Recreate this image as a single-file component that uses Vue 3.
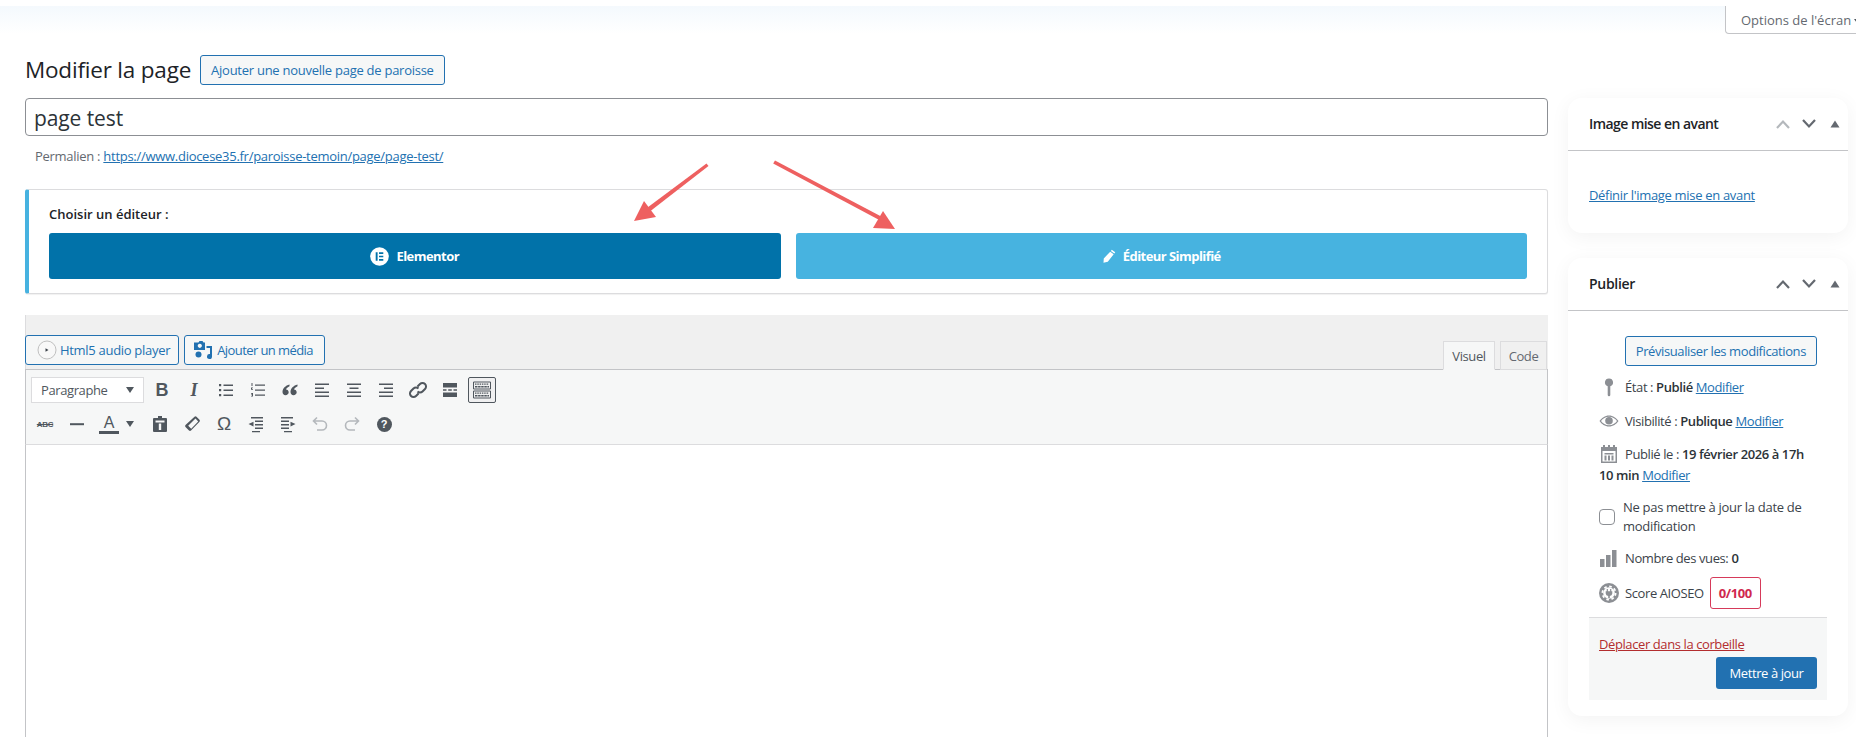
<script setup>
const row1 = [
  { k: 'b', t: 'B', c: 'g-bold' },
  { k: 'i', t: 'I', c: 'g-ital' },
  { k: 'ul', f: 'M3 4h2.200v2.200H3zM7.500 4.500H17V6H7.500zM3 9h2.200v2.200H3zM7.500 9.500H17V11H7.500zM3 14h2.200v2.200H3zM7.500 14.500H17V16H7.500z' },
  { k: 'ol', f: 'M3.500 3h1v3h-1zM3 7.500h2v.8H4v.7h1v.7H3zM3 13h2v3.500H3v-.7h1v-.7H3v-.7h1v-.7H3zM7 4.500h10V5.700H7zM7 9.500h10v1.200H7zM7 14.500h10v1.200H7z' },
  { k: 'q', f: 'M9.500 4.500C5.500 5.500 2.500 8.500 2.500 12c0 2 1.300 3.200 3 3.200S8.700 14 8.700 12.300 7.500 9.500 6 9.500c.4-1.300 1.800-2.600 3.500-3.300zM17.500 4.500c-4 1-7 4-7 7.500 0 2 1.300 3.200 3 3.200s3.200-1.200 3.200-2.900-1.200-2.800-2.700-2.800c.4-1.300 1.800-2.600 3.500-3.300z' },
  { k: 'al', f: 'M3 3.500h14V5H3zM3 7.500h9V9H3zM3 11.500h14V13H3zM3 15.500h14V17H3z' },
  { k: 'ac', f: 'M3 3.500h14V5H3zM5.500 7.500h9V9h-9zM3 11.500h14V13H3zM3 15.500h14V17H3z' },
  { k: 'ar', f: 'M3 3.500h14V5H3zM8 7.500h9V9H8zM3 11.500h14V13H3zM3 15.500h14V17H3z' },
  { k: 'ln', s: 'M9.500 6.500L12 4a3.500 3.500 0 0 1 5 5l-2.500 2.500a3.500 3.500 0 0 1-5 0M10.500 13.500L8 16a3.500 3.500 0 0 1-5-5l2.500-2.500a3.500 3.500 0 0 1 5 0', w: 2 },
  { k: 'mo', f: 'M3 3h14v4.500H3zM3 12.500h14V17H3zM3 9.300h3.500v1.400H3zM8.200 9.300h3.600v1.400H8.200zM13.500 9.300H17v1.400h-3.500z' },
]
const row2 = [
  { k: 'ab', t: 'ABC', c: 'g-abc' },
  { k: 'hr', f: 'M3 9.200h14v2H3z' },
]
const row2b = [
  { k: 'pa', f: 'M8 2h4v2h4a1 1 0 0 1 1 1v12a1 1 0 0 1-1 1H4a1 1 0 0 1-1-1V5a1 1 0 0 1 1-1h4zM5.500 6.500v2h9v-2zM8.800 9.500V16h2.400V9.500z' },
  { k: 'er', f: 'M12.500 2.800a1.500 1.500 0 0 1 2 0l3 3a1.500 1.500 0 0 1 0 2L9 16.500a1.500 1.500 0 0 1-2 0l-3.500-3.500a1.500 1.500 0 0 1 0-2zM13.500 4.500L6.200 11.800l3 3 7-7.300z' },
  { k: 'om', t: 'Ω', c: 'g-om' },
  { k: 'ou', f: 'M5 3h12v1.500H5zM9 6.500h8V8H9zM9 10h8v1.500H9zM9 13.500h8V15H9zM6 17h8v1.300H6zM7.500 7.800v4.700L2.500 10z' },
  { k: 'in', f: 'M3 3h12v1.500H3zM3 6.500h8V8H3zM3 10h8v1.500H3zM3 13.500h8V15H3zM6 17h8v1.300H6zM12.500 7.800v4.700l5-2.500z' },
]
</script>

<template>
  <div class="page">
    <div class="topbar">
      <button class="screen-opts">Options de l'écran<span class="caret small"></span></button>
    </div>

    <div class="wrap">
      <div class="heading">
        <h1>Modifier la page</h1>
        <a class="btn add">Ajouter une nouvelle page de paroisse</a>
      </div>

      <div class="columns">
        <main class="main">
          <div class="title-input">page test</div>
          <div class="permalink">Permalien : <a class="link">https://www.diocese35.fr/paroisse-temoin/page/page-test/</a></div>

          <section class="notice">
            <div class="notice-label">Choisir un éditeur :</div>
            <div class="choices">
              <a class="choice elementor">
                <svg width="19" height="19" viewBox="0 0 20 20"><circle cx="10" cy="10" r="9.800" fill="#fff"/><path fill="#0172a9" d="M6 5.500h2v9H6zM9.500 5.500H14v1.800H9.500zM9.500 9.100H14v1.800H9.500zM9.500 12.700H14v1.800H9.500z"/></svg>
                Elementor
              </a>
              <a class="choice simple">
                <svg width="14" height="14" viewBox="0 0 15 15"><path fill="#fff" d="M10.500.8l3.700 2.700-1 1.400-3.700-2.700zM8.800 2.900l3.700 2.700-6.300 8-4.600 1.200.3-4.700z"/></svg>
                Éditeur Simplifié
              </a>
            </div>
          </section>

          <section class="editor">
            <div class="editor-top">
              <div class="media-btns">
                <a class="btn media audio">
                  <svg width="20" height="20" viewBox="0 0 20 20"><circle cx="10" cy="10" r="9" fill="#f8f8f8" stroke="#c0c0c0"/><path fill="#3c434a" d="M8.500 8.200l3 1.800-3 1.800z"/></svg>
                  Html5 audio player
                </a>
                <a class="btn media add-media">
                  <svg width="20" height="20" viewBox="0 0 20 20" fill="#2271b1"><path fill-rule="evenodd" d="M4 2.500h1.500l1-1.500h3l1 1.500H12V10H1V2.500zM6.800 3.700a2.100 2.100 0 1 0 .01 0z"/><circle cx="5.500" cy="14.500" r="3"/><path d="M13.500 6H19v10.500a2.500 2.500 0 1 1-2-2.400V8h-3.500z"/></svg>
                  Ajouter un média
                </a>
              </div>
              <div class="tabs">
                <span class="tab on">Visuel</span>
                <span class="tab">Code</span>
              </div>
            </div>

            <div class="toolbar">
              <div class="tool-row">
                <div class="format">Paragraphe <span class="caret"></span></div>
                <span v-for="i in row1" :key="i.k" class="tool">
                  <span v-if="i.t" :class="i.c">{{ i.t }}</span>
                  <svg v-else width="20" height="20" viewBox="0 0 20 20">
                    <path v-if="i.f" :d="i.f" fill="#50575e"/>
                    <path v-if="i.s" :d="i.s" fill="none" stroke="#50575e" :stroke-width="i.w"/>
                  </svg>
                </span>
                <span class="tool active">
                  <svg width="20" height="20" viewBox="0 0 20 20" fill="none" stroke="#50575e">
                    <path d="M1.500 2h17v7h-17zM1.500 11h17v7h-17z"/>
                    <path stroke-dasharray="1.500 .8" stroke-width="1.200" d="M3 4.200h14M3 13.200h14"/>
                    <path stroke-width="1.400" stroke-dasharray="2.500 .6" d="M3 6.800h14M3 15.800h14"/>
                  </svg>
                </span>
              </div>
              <div class="tool-row">
                <span v-for="i in row2" :key="i.k" class="tool">
                  <span v-if="i.t" :class="i.c">{{ i.t }}</span>
                  <svg v-else width="20" height="20" viewBox="0 0 20 20"><path :d="i.f" fill="#50575e"/></svg>
                </span>
                <span class="tool colour"><span class="g-a">A</span><span class="caret"></span></span>
                <span v-for="i in row2b" :key="i.k" class="tool">
                  <span v-if="i.t" :class="i.c">{{ i.t }}</span>
                  <svg v-else width="20" height="20" viewBox="0 0 20 20"><path :d="i.f" fill="#50575e" fill-rule="evenodd"/></svg>
                </span>
                <span class="tool">
                  <svg width="20" height="20" viewBox="0 0 20 20" fill="none" stroke="#b4b8bc" stroke-width="1.600"><path d="M7 3.500L3.500 7 7 10.500M4 7h8a4 4 0 0 1 0 9H7"/></svg>
                </span>
                <span class="tool">
                  <svg width="20" height="20" viewBox="0 0 20 20" fill="none" stroke="#b4b8bc" stroke-width="1.600"><path d="M13 3.500L16.500 7 13 10.500M16 7H8a4 4 0 0 0 0 9h5"/></svg>
                </span>
                <span class="tool"><span class="g-help">?</span></span>
              </div>
            </div>
            <div class="editor-body"></div>
          </section>
        </main>

        <aside class="side">
          <section class="box">
            <header class="box-head">
              <h2>Image mise en avant</h2>
              <div class="ctrls">
                <svg width="16" height="12" viewBox="0 0 16 12" fill="none" stroke="#b4b8bc" stroke-width="2.200"><path d="M2 10l6-6.500 6 6.500"/></svg>
                <svg width="16" height="12" viewBox="0 0 16 12" fill="none" stroke="#646970" stroke-width="2.200"><path d="M2 2l6 6.500L14 2"/></svg>
                <svg width="10" height="8" viewBox="0 0 10 8"><path fill="#646970" d="M5 .5L9.500 7.500H.5z"/></svg>
              </div>
            </header>
            <div class="feat"><a class="link">Définir l'image mise en avant</a></div>
          </section>

          <section class="box publish">
            <header class="box-head">
              <h2>Publier</h2>
              <div class="ctrls">
                <svg width="16" height="12" viewBox="0 0 16 12" fill="none" stroke="#646970" stroke-width="2.200"><path d="M2 10l6-6.500 6 6.500"/></svg>
                <svg width="16" height="12" viewBox="0 0 16 12" fill="none" stroke="#646970" stroke-width="2.200"><path d="M2 2l6 6.500L14 2"/></svg>
                <svg width="10" height="8" viewBox="0 0 10 8"><path fill="#646970" d="M5 .5L9.500 7.500H.5z"/></svg>
              </div>
            </header>
            <div class="pub-body">
              <div class="preview-row"><a class="btn">Prévisualiser les modifications</a></div>

              <div class="pub-row r-state">
                <svg class="ico" width="20" height="20" viewBox="0 0 20 20"><path fill="#8c8f94" d="M10 1.500a4 4 0 0 1 1.300 7.800V18a1.300 1.300 0 0 1-2.600 0V9.300A4 4 0 0 1 10 1.500z"/></svg>État : <b>Publié</b> <a class="link">Modifier</a>
              </div>
              <div class="pub-row r-vis">
                <svg class="ico" width="20" height="20" viewBox="0 0 20 20"><path fill="#8c8f94" fill-rule="evenodd" d="M10 4.500c4 0 7.500 2.500 9.500 5.500-2 3-5.500 5.500-9.500 5.500S2.500 13 .5 10c2-3 5.500-5.500 9.500-5.500zM10 5.700c-3.300 0-6.200 1.900-8 4.300 1.800 2.400 4.700 4.300 8 4.300s6.200-1.900 8-4.300c-1.800-2.400-4.700-4.300-8-4.300z"/><circle cx="10" cy="9.800" r="3.800" fill="#8c8f94"/></svg>Visibilité : <b>Publique</b> <a class="link">Modifier</a>
              </div>
              <div class="pub-row r-date">
                <svg class="ico" width="20" height="20" viewBox="0 0 20 20"><path fill="#8c8f94" fill-rule="evenodd" d="M4 1h2v2h3V1h2v2h3V1h2v2h2v16H2V3h2zM3.500 7v10.500h13V7zM5.500 9h9v1.500h-9zM5.500 11.500h2v5h-2zM9 11.500h2v5H9zM12.500 11.500h2v5h-2z"/></svg>Publié le : <b>19 février 2026 à 17h<br>10 min</b> <a class="link">Modifier</a>
              </div>
              <label class="keep">
                <span class="check"></span>
                <span>Ne pas mettre à jour la date de modification</span>
              </label>
              <div class="pub-row r-views">
                <svg class="ico" width="20" height="20" viewBox="0 0 20 20"><path fill="#8c8f94" d="M1 11h4.500v8H1zM7 7h4.500v12H7zM13 2h4.500v17H13z"/></svg>Nombre des vues: <b>0</b>
              </div>
              <div class="r-score">
                <svg width="20" height="20" viewBox="0 0 20 20"><circle cx="10" cy="10" r="10" fill="#8c8f94"/><circle cx="10" cy="10" r="5.800" fill="#fff"/><circle cx="10" cy="10" r="6.600" fill="none" stroke="#fff" stroke-width="1.800" stroke-dasharray="2.600 2.580"/><path fill="#8c8f94" d="M7.700 6h1.200v2.300h2.200V6h1.200v2.300h1v2.200a3 3 0 0 1-2.500 2.600V15H9.200v-1.900a3 3 0 0 1-2.500-2.600V8.300h1z"/></svg>
                <span>Score AIOSEO</span>
                <span class="badge">0/100</span>
              </div>
              <div class="pub-foot">
                <a class="trash">Déplacer dans la corbeille</a>
                <a class="btn-primary">Mettre à jour</a>
              </div>
            </div>
          </section>
        </aside>
      </div>
    </div>

    <svg class="arrows" width="1856" height="737" viewBox="0 0 1856 737">
      <g fill="#ee6060">
        <path d="M706.500 163.500l2 2.500-58 45-3-3.500z"/>
        <path d="M634 221l10-20 12 16z"/>
        <path d="M775 160.500l-1.800 3 107 57 2-3.500z"/>
        <path d="M895 229l-12-18-10 17z"/>
      </g>
    </svg>
  </div>
</template>

<style>
html, body { margin: 0; background: #fff; }
</style>

<style scoped>
.page {
  position: relative;
  height: 737px;
  overflow: hidden;
  background: #fff;
  color: #3c434a;
  font-family: "Open Sans", "Noto Sans", sans-serif;
  font-size: 13px;
  line-height: 20px;
  letter-spacing: -0.4px;
  display: flex;
  flex-direction: column;
}
a { cursor: pointer; }
.topbar {
  margin-top: 6px;
  height: 28px;
  flex: none;
  display: flex;
  justify-content: flex-end;
  background: linear-gradient(#f4f9fd, #fff);
}
.screen-opts {
  flex: none;
  width: 147px;
  height: 28px;
  margin-right: -16px;
  padding: 0 0 0 15px;
  text-align: left;
  white-space: nowrap;
  font: inherit;
  letter-spacing: 0;
  color: #646970;
  background: #fff;
  border: 1px solid #c3c4c7;
  border-top: 0;
  border-radius: 0 0 4px 4px;
}
.caret {
  display: inline-block;
  width: 0;
  height: 0;
  border: 4px solid transparent;
  border-top: 6px solid #50575e;
  border-bottom: 0;
}
.caret.small {
  margin-left: 3px;
  border-width: 4px 3px 0;
  border-top-color: #50575e;
  vertical-align: 2px;
}
.wrap {
  flex: 1;
  min-height: 0;
  padding: 21px 8px 0 25px;
  display: flex;
  flex-direction: column;
}
.heading {
  display: flex;
  align-items: center;
  height: 30px;
  gap: 9px;
  margin-bottom: 13px;
}
h1 {
  margin: 0;
  font-size: 22.500px;
  font-weight: 400;
  color: #1d2327;
  letter-spacing: -0.2px;
}
.btn {
  display: inline-flex;
  align-items: center;
  height: 30px;
  box-sizing: border-box;
  padding: 0 10px;
  border: 1px solid #2271b1;
  border-radius: 3px;
  background: #f6f7f7;
  color: #2271b1;
}
.btn.add { letter-spacing: -0.26px; }
.columns {
  flex: 1;
  min-height: 0;
  display: grid;
  grid-template-columns: 1523px 280px;
  gap: 20px;
}
.main { display: flex; flex-direction: column; min-height: 0; }
.title-input {
  height: 38px;
  box-sizing: border-box;
  padding: 1px 8px 0;
  border: 1px solid #8c8f94;
  border-radius: 4px;
  font-size: 21px;
  line-height: 36px;
  color: #2c3338;
  letter-spacing: -0.1px;
}
.permalink { margin: 10px 0 0 10px; color: #646970; font-weight: 500; letter-spacing: -0.28px; }
.link { color: #2271b1; text-decoration: underline; font-weight: 400; }
.notice {
  margin-top: 23px;
  height: 105px;
  box-sizing: border-box;
  padding: 14px 20px 14px 20px;
  background: #fff;
  border: 1px solid #dcdcde;
  border-left: 4px solid #46b2e0;
  border-radius: 3px;
  box-shadow: 0 1px 1px rgba(0, 0, 0, .06);
}
.notice-label { color: #1d2327; font-weight: 600; letter-spacing: 0; }
.choices { display: flex; gap: 15px; margin-top: 9px; }
.choice {
  flex: 1;
  height: 46px;
  display: flex;
  align-items: center;
  justify-content: center;
  gap: 7px;
  border-radius: 3px;
  color: #fff;
  font-weight: 700;
  letter-spacing: -0.55px;
}
.elementor { background: #0172a9; }
.simple { background: #47b3e0; }
.editor {
  margin-top: 21px;
  flex: 1;
  min-height: 0;
  display: flex;
  flex-direction: column;
}
.editor-top {
  height: 55px;
  flex: none;
  box-sizing: border-box;
  display: flex;
  justify-content: space-between;
  align-items: flex-end;
  background: #f0f0f0;
  border-left: 1px solid #dcdcde;
  margin-bottom: -1px;
}
.media-btns {
  display: flex;
  gap: 5px;
  margin: 0 0 5px -1px;
}
.media.audio { padding: 0 8px 0 11px; gap: 3px; letter-spacing: -0.3px; }
.media.add-media { padding: 0 11px 0 8px; gap: 4px; letter-spacing: -0.58px; }
.tabs {
  display: flex;
  gap: 5px;
  margin-right: 1px;
  position: relative;
  z-index: 1;
}
.tab {
  width: 47px;
  height: 29px;
  box-sizing: border-box;
  display: flex;
  align-items: center;
  justify-content: center;
  border: 1px solid #dcdcde;
  background: #f0f0f0;
  color: #646970;
}
.tab.on {
  width: 52px;
  background: #f6f7f7;
  color: #50575e;
  border-color: #dcdcde #dcdcde #f6f7f7;
}
.toolbar {
  flex: none;
  box-sizing: border-box;
  height: 76px;
  padding: 7px 5px 0;
  background: #f6f7f7;
  border: 1px solid #c3c4c7;
  border-bottom-color: #dcdcde;
}
.tool-row { display: flex; gap: 4px; height: 26px; margin-bottom: 8px; align-items: center; }
.format {
  width: 113px;
  height: 26px;
  box-sizing: border-box;
  padding: 0 9px;
  display: flex;
  align-items: center;
  justify-content: space-between;
  background: #fff;
  border: 1px solid #dcdcde;
  color: #50575e;
}
.tool {
  width: 28px;
  height: 26px;
  box-sizing: border-box;
  display: flex;
  align-items: center;
  justify-content: center;
  color: #50575e;
  letter-spacing: 0;
}
.tool.active { border: 1px solid #50575e; border-radius: 2px; background: #f0f0f1; }
.tool.colour { width: 46px; justify-content: flex-start; padding-left: 4px; gap: 7px; margin-right: 1px; }
.g-bold { font: 700 18px "Liberation Sans", sans-serif; }
.g-ital { font: italic 700 18px "Liberation Serif", serif; }
.g-abc { font: 700 8px "Liberation Sans", sans-serif; text-decoration: line-through; letter-spacing: -0.3px; }
.g-om { font: 400 19px "Liberation Sans", sans-serif; }
.g-a {
  font: 400 16px/17px "Liberation Sans", sans-serif;
  width: 20px;
  text-align: center;
  border-bottom: 3px solid #50575e;
}
.g-help {
  width: 15px;
  height: 15px;
  border-radius: 50%;
  background: #50575e;
  color: #fff;
  font: 700 11px/15px "Liberation Sans", sans-serif;
  text-align: center;
}
.editor-body {
  flex: 1;
  border-left: 1px solid #c3c4c7;
  border-right: 1px solid #c3c4c7;
  background: #fff;
}
.side { display: flex; flex-direction: column; align-items: stretch; gap: 25px; }
.box {
  background: #fff;
  border-radius: 14px;
  box-shadow: 0 4px 20px rgba(0, 0, 0, .05);
}
.box-head {
  height: 53px;
  box-sizing: border-box;
  padding: 0 8px 1px 21px;
  display: flex;
  align-items: center;
  justify-content: space-between;
  border-bottom: 1px solid #c3c4c7;
}
h2 { margin: 0; font-size: 14px; font-weight: 600; color: #1d2327; letter-spacing: -0.55px; }
.publish h2 { letter-spacing: -0.3px; }
.ctrls { display: flex; align-items: center; gap: 10px; }
.ctrls svg:last-child { margin-left: 3px; }
.feat { height: 82px; box-sizing: border-box; padding: 34px 21px 0; letter-spacing: -0.32px; }
.pub-body { padding: 25px 21px 16px; }
.preview-row { display: flex; justify-content: flex-end; padding-right: 10px; }
.pub-row { padding-left: 10px; }
.ico { display: inline-block; width: 20px; margin-right: 6px; vertical-align: -5px; }
.r-state { margin-top: 11px; }
.r-vis { margin-top: 14px; }
.r-date { margin-top: 13px; line-height: 21px; white-space: nowrap; letter-spacing: -0.4px; }
b { font-weight: 600; color: #2c3338; }
.keep {
  margin: 12px 0 0 10px;
  display: flex;
  gap: 8px;
  line-height: 19px;
  align-items: center;
  width: 215px;
  letter-spacing: -0.3px;
}
.check {
  flex: none;
  width: 16px;
  height: 16px;
  box-sizing: border-box;
  border: 1px solid #8c8f94;
  border-radius: 4px;
  background: #fff;
}
.r-views { margin-top: 12px; }
.r-score {
  margin: 9px 0 8px 10px;
  display: flex;
  align-items: center;
  gap: 6px;
}
.badge {
  height: 32px;
  width: 51px;
  box-sizing: border-box;
  display: flex;
  align-items: center;
  justify-content: center;
  border: 1px solid #d63a5a;
  border-radius: 3px;
  color: #d0284e;
  font-weight: 700;
}
.pub-foot {
  height: 83px;
  box-sizing: border-box;
  padding: 16px 10px 0;
  background: #f6f7f7;
  border-top: 1px solid #dcdcde;
  display: flex;
  flex-direction: column;
}
.trash { color: #b32d2e; text-decoration: underline; }
.btn-primary {
  align-self: flex-end;
  margin-top: 3px;
  width: 101px;
  height: 32px;
  display: flex;
  align-items: center;
  justify-content: center;
  background: #2271b1;
  color: #fff;
  border-radius: 3px;
  font-weight: 500;
}
.arrows { position: absolute; left: 0; top: 0; pointer-events: none; }
</style>
